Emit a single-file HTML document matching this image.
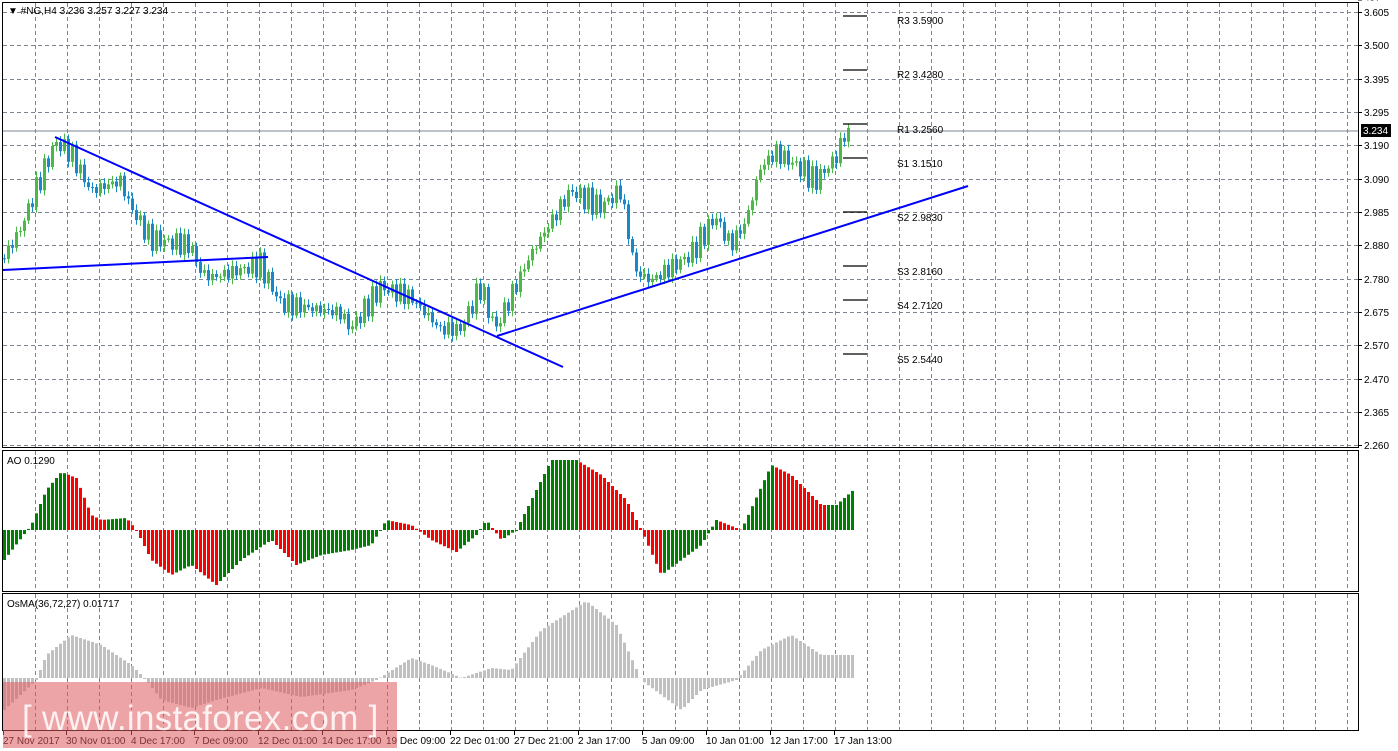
<!DOCTYPE html>
<html><head><meta charset="utf-8"><style>
html,body{margin:0;padding:0;background:#fff;width:1398px;height:751px;overflow:hidden}
svg{display:block}
text{font-family:"Liberation Sans",sans-serif;font-size:10px;fill:#000}
</style></head><body>
<svg id="s" width="1398" height="751" xmlns="http://www.w3.org/2000/svg">
<rect width="1398" height="751" fill="#fff"/>
<g id="grid"></g>
<g id="bars"></g>
<line x1="3" y1="131" x2="1358" y2="131" stroke="#7a8590" stroke-width="1"/>
<g stroke="#000" stroke-width="1.3">
<line x1="843" y1="16" x2="867" y2="16"/><line x1="843" y1="70" x2="867" y2="70"/>
<line x1="843" y1="124" x2="867" y2="124"/><line x1="843" y1="158" x2="867" y2="158"/>
<line x1="843" y1="212" x2="867" y2="212"/><line x1="843" y1="266" x2="867" y2="266"/>
<line x1="843" y1="300" x2="867" y2="300"/><line x1="843" y1="354" x2="867" y2="354"/>
</g>
<g font-size="10">
<text x="897" y="24">R3 3.5900</text><text x="897" y="78">R2 3.4280</text>
<text x="897" y="133">R1 3.2560</text><text x="897" y="167">S1 3.1510</text>
<text x="897" y="221">S2 2.9830</text><text x="897" y="275">S3 2.8160</text>
<text x="897" y="309">S4 2.7120</text><text x="897" y="363">S5 2.5440</text>
</g>
<g stroke="#0000ff" stroke-width="2">
<line x1="55" y1="137" x2="563" y2="367"/>
<line x1="3" y1="270" x2="268" y2="257"/>
<line x1="497" y1="336" x2="968" y2="186"/>
</g>
<g fill="none" stroke="#000" stroke-width="1">
<rect x="2.5" y="2.5" width="1356" height="445"/>
<rect x="2.5" y="450.5" width="1356" height="141"/>
<rect x="2.5" y="593.5" width="1356" height="137"/>
</g>
<g id="axis"></g>
<text x="8" y="14" font-size="10">▼ #NG,H4  3.236 3.257 3.227 3.234</text>
<text x="7" y="464">AO 0.1290</text>
<text x="7" y="607">OsMA(36,72,27) 0.01717</text>
<rect x="1361" y="124" width="30" height="13" fill="#000"/>
<text x="1363" y="134" style="fill:#fff">3.234</text>
<rect x="3" y="682" width="394" height="66" fill="rgba(222,90,95,0.55)"/>
<text x="22" y="730" style="fill:rgba(255,255,255,0.85);font-size:35px;letter-spacing:0.3px">[ www.instaforex.com ]</text>
</svg>
<script>
var NS="http://www.w3.org/2000/svg";
function el(p,t,a){var e=document.createElementNS(NS,t);for(var k in a)e.setAttribute(k,a[k]);p.appendChild(e);return e;}
var grid=document.getElementById('grid'),bars=document.getElementById('bars'),ax=document.getElementById('axis');
var gs={stroke:"#7a8590","stroke-width":1,"stroke-dasharray":"4,3"};
for(var x=35;x<1358;x+=32){
 [[3,447],[451,591],[594,730]].forEach(function(r){var a=Object.assign({x1:x+.5,x2:x+.5,y1:r[0],y2:r[1]},gs);el(grid,'line',a);});
}
var pl=[["3.605",12],["3.500",45],["3.395",79],["3.295",112],["3.190",145],["3.090",179],["2.985",212],["2.880",245],["2.780",279],["2.675",312],["2.570",345],["2.470",379],["2.365",412],["2.260",445]];
pl.forEach(function(p){el(grid,'line',Object.assign({x1:3,x2:1358,y1:p[1]+.5,y2:p[1]+.5},gs));el(ax,'line',{x1:1358,x2:1362,y1:p[1]+.5,y2:p[1]+.5,stroke:"#000"});var t=el(ax,'text',{x:1364,y:p[1]+4});t.textContent=p[0];});
[[457,"0.2495"],[530,"0.00"],[585,"-0.1956"],[599,"0.06263"],[678,"0.00"],[720,"-0.03955"]].forEach(function(p){
 if(p[1]==530||p[1]==678) el(grid,'line',Object.assign({x1:3,x2:1358,y1:p[1]+.5,y2:p[1]+.5},gs));
 el(ax,'line',{x1:1358,x2:1362,y1:p[1]+.5,y2:p[1]+.5,stroke:"#000"});var t=el(ax,'text',{x:1364,y:p[1]+4});t.textContent=p[0];});
var tl=["27 Nov 2017","30 Nov 01:00","4 Dec 17:00","7 Dec 09:00","12 Dec 01:00","14 Dec 17:00","19 Dec 09:00","22 Dec 01:00","27 Dec 21:00","2 Jan 17:00","5 Jan 09:00","10 Jan 01:00","12 Jan 17:00","17 Jan 13:00"];
var tx=[3,66,131,194,258,322,386,450,514,578,642,706,770,834];
tl.forEach(function(s,i){el(ax,'line',{x1:tx[i]+.5,x2:tx[i]+.5,y1:731,y2:735,stroke:"#000"});var t=el(ax,'text',{x:tx[i],y:744});t.textContent=s;});
function interp(k,x){for(var i=0;i<k.length-1;i++){if(x>=k[i][0]&&x<=k[i+1][0]){var f=(x-k[i][0])/(k[i+1][0]-k[i][0]);return k[i][1]+f*(k[i+1][1]-k[i][1]);}}return k[k.length-1][1];}
var P=[[3,2.84],[20,2.93],[35,3.05],[55,3.2],[70,3.17],[90,3.05],[120,3.08],[130,3.0],[150,2.9],[190,2.88],[200,2.8],[210,2.78],[260,2.82],[280,2.7],[340,2.67],[350,2.62],[380,2.75],[410,2.72],[440,2.62],[460,2.62],[480,2.75],[495,2.62],[530,2.85],[560,3.0],[570,3.05],[600,3.0],[620,3.05],[635,2.8],[650,2.77],[690,2.85],[715,2.97],[730,2.88],[745,2.95],[760,3.12],[775,3.17],[800,3.12],[815,3.08],[835,3.15],[845,3.23],[850,3.234]];
function py(p){return 12+(3.605-p)*321.9;}
var prev=2.84;
for(var x=4;x<=850;x+=4){
 var c=interp(P,x)+0.025*Math.sin(x*0.9)+0.015*Math.sin(x*2.3);
 var o=prev;var h=Math.max(o,c)+0.008+0.01*Math.abs(Math.sin(x*1.7)),l=Math.min(o,c)-0.008-0.01*Math.abs(Math.cos(x*1.3));
 var col=c>=o?"#4cb848":"#1888c8";
 el(bars,'line',{x1:x+.5,x2:x+.5,y1:py(h),y2:py(l),stroke:col});
 var y1=py(Math.max(o,c)),y2=py(Math.min(o,c));
 el(bars,'rect',{x:x-1,y:y1,width:3,height:Math.max(1,y2-y1),fill:col});
 prev=c;
}
var A=[[3,560],[30,525],[45,490],[60,472],[75,478],[90,515],[100,520],[125,518],[135,530],[150,560],[170,575],[190,565],[215,585],[240,560],[270,540],[295,565],[320,555],[350,550],[370,545],[385,520],[410,525],[430,540],[455,552],[475,535],[485,520],[500,540],[515,530],[530,500],[550,460],[575,460],[600,475],[625,500],[640,530],[660,575],[680,560],[700,545],[715,520],[740,530],[770,465],[790,475],[820,505],[835,505],[852,490]];
var pa=null;
for(var x=3;x<=851;x+=4){var v=interp(A,x);var col=(pa===null||v<=pa)?"#008000":"#ff0000";
 el(bars,'rect',{x:x,y:Math.min(v,530),width:3,height:Math.abs(530-v)||1,fill:col});pa=v;}
var O=[[3,710],[35,680],[45,655],[70,635],[100,645],[130,665],[145,680],[160,700],[190,708],[215,700],[260,688],[300,697],[350,690],[375,680],[410,658],[430,665],[460,678],[490,668],[510,670],[540,630],[585,601],[615,625],[640,680],[680,710],[700,690],[735,680],[760,650],[790,635],[820,655],[852,655]];
for(var x=3;x<=851;x+=4){var v=interp(O,x);el(bars,'rect',{x:x,y:Math.min(v,678),width:3,height:Math.abs(678-v)||1,fill:"#c0c0c0"});}
</script>
</body></html>
